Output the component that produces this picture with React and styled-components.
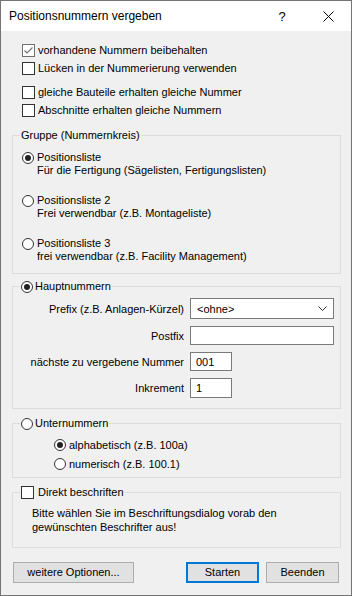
import React from 'react'
import styled, { createGlobalStyle } from 'styled-components'

const GlobalStyle = createGlobalStyle`
  html, body {
    margin: 0;
    padding: 0;
    background: #ffffff;
  }
  body {
    font-family: "Liberation Sans", Arial, sans-serif;
    font-size: 11px;
    color: #000;
  }
`

const Window = styled.div`
  width: 352px;
  height: 596px;
  box-sizing: border-box;
  border: 1px solid #747474;
  background: #f0f0f0;
  display: flex;
  flex-direction: column;
`

const TitleBar = styled.div`
  height: 30px;
  background: #ffffff;
  display: flex;
  align-items: center;
  padding-left: 8px;
`

const Title = styled.div`
  flex: 1;
  font-size: 12px;
`

const TitleButton = styled.div`
  width: 46px;
  height: 30px;
  display: flex;
  align-items: center;
  justify-content: center;
  font-size: 13px;
`

const Body = styled.div`
  padding: 10px 10px 0 11px;
  display: flex;
  flex-direction: column;
`

const CheckList = styled.div`
  display: flex;
  flex-direction: column;
  margin-left: 10px;
  margin-top: ${p => p.$top || 0}px;
`

const Row = styled.label`
  height: ${p => p.$h || 18}px;
  display: flex;
  align-items: center;
  gap: ${p => p.$gap || 3}px;
  white-space: nowrap;
`

const Box = styled.span`
  width: 13px;
  height: 13px;
  box-sizing: border-box;
  border: 1px solid ${p => (p.$muted ? '#707070' : '#333333')};
  background: #ffffff;
  flex: none;
  display: flex;
  align-items: center;
  justify-content: center;
`

const Circle = styled.span`
  width: 12px;
  height: 12px;
  box-sizing: border-box;
  border: 1px solid #333333;
  border-radius: 50%;
  background: #ffffff;
  flex: none;
  display: flex;
  align-items: center;
  justify-content: center;
  margin-top: ${p => p.$top || 0}px;
  &::after {
    content: '';
    width: 6px;
    height: 6px;
    border-radius: 50%;
    background: ${p => (p.$on ? '#222222' : 'transparent')};
  }
`

const Checkbox = ({ checked, muted }) => (
  <Box $muted={muted}>
    {checked && (
      <svg width="11" height="11" viewBox="0 0 11 11">
        <path d="M1.5 5.5 L4 8 L9.5 2.5" fill="none" stroke="#707070" strokeWidth="1.1" />
      </svg>
    )}
  </Box>
)

const Group = styled.fieldset`
  margin: ${p => p.$top || 0}px 0 0 0;
  padding: 0;
  min-width: 0;
  border: 1px solid #dcdcdc;
`

const Legend = styled.legend`
  margin-left: 7px;
  padding: 0 1px;
  line-height: 13px;
  display: flex;
  align-items: center;
  gap: ${p => p.$gap || 0}px;
  white-space: nowrap;
`

const GroupBody = styled.div`
  padding: ${p => p.$pad};
  display: flex;
  flex-direction: column;
  gap: ${p => p.$gap || 0}px;
`

const Choice = styled.label`
  display: flex;
  align-items: flex-start;
  gap: 3px;
`

const ChoiceText = styled.div`
  line-height: 13px;
`

const FormGrid = styled.div`
  display: grid;
  grid-template-columns: 171px 1fr;
  grid-template-rows: 21px 19px 19px 20px;
  column-gap: 6px;
  row-gap: 7px;
  padding: 5px 0 10px 0;
  align-items: center;
`

const FieldLabel = styled.div`
  text-align: right;
  white-space: nowrap;
`

const Input = styled.div`
  width: ${p => p.$w}px;
  height: 100%;
  box-sizing: border-box;
  border: 1px solid #7a7a7a;
  background: #ffffff;
  display: flex;
  align-items: center;
  padding-left: 5px;
  font-size: 11px;
`

const Select = styled(Input)`
  padding: 0 6px 0 6px;
  justify-content: space-between;
`

const Note = styled.p`
  margin: 0;
  line-height: 14px;
`

const ButtonRow = styled.div`
  display: flex;
  margin: 14px 2px 0 1px;
  gap: 7px;
`

const Button = styled.div`
  width: ${p => p.$w}px;
  height: 21px;
  box-sizing: border-box;
  background: #e1e1e1;
  border: ${p => (p.$default ? '2px solid #0078d7' : '1px solid #adadad')};
  display: flex;
  align-items: center;
  justify-content: center;
  margin-left: ${p => p.$push ? 'auto' : '0'};
  padding-bottom: 1px;
`

export default function App() {
  return (
    <>
      <GlobalStyle />
      <Window>
        <TitleBar>
          <Title>Positionsnummern vergeben</Title>
          <TitleButton>?</TitleButton>
          <TitleButton>
            <svg width="11" height="11" viewBox="0 0 11 11">
              <path d="M0.5 0.5 L10.5 10.5 M10.5 0.5 L0.5 10.5" stroke="#000" strokeWidth="1" />
            </svg>
          </TitleButton>
        </TitleBar>
        <Body>
          <CheckList>
            <Row><Checkbox checked muted />vorhandene Nummern beibehalten</Row>
            <Row><Checkbox />Lücken in der Nummerierung verwenden</Row>
          </CheckList>
          <CheckList $top={6}>
            <Row><Checkbox />gleiche Bauteile erhalten gleiche Nummer</Row>
            <Row><Checkbox />Abschnitte erhalten gleiche Nummern</Row>
          </CheckList>

          <Group $top={10}>
            <Legend>Gruppe (Nummernkreis)</Legend>
            <GroupBody $pad="9px 0 10px 9px" $gap={17}>
              <Choice>
                <Circle $on $top={1} />
                <ChoiceText>Positionsliste<br />Für die Fertigung (Sägelisten, Fertigungslisten)</ChoiceText>
              </Choice>
              <Choice>
                <Circle $top={1} />
                <ChoiceText>Positionsliste 2<br />Frei verwendbar (z.B. Montageliste)</ChoiceText>
              </Choice>
              <Choice>
                <Circle $top={1} />
                <ChoiceText>Positionsliste 3<br />frei verwendbar (z.B. Facility Management)</ChoiceText>
              </Choice>
            </GroupBody>
          </Group>

          <Group $top={6}>
            <Legend $gap={2}><Circle $on />Hauptnummern</Legend>
            <FormGrid>
              <FieldLabel>Prefix (z.B. Anlagen-Kürzel)</FieldLabel>
              <Select $w={144}>
                <span>&lt;ohne&gt;</span>
                <svg width="9" height="5" viewBox="0 0 9 5">
                  <path d="M0.5 0.5 L4.5 4.5 L8.5 0.5" fill="none" stroke="#333" strokeWidth="1" />
                </svg>
              </Select>
              <FieldLabel>Postfix</FieldLabel>
              <Input $w={144} />
              <FieldLabel>nächste zu vergebene Nummer</FieldLabel>
              <Input $w={42}>001</Input>
              <FieldLabel>Inkrement</FieldLabel>
              <Input $w={42}>1</Input>
            </FormGrid>
          </Group>

          <Group $top={8}>
            <Legend $gap={2}><Circle />Unternummern</Legend>
            <GroupBody $pad="5px 0 4px 41px">
              <Row $h={19}><Circle $on />alphabetisch (z.B. 100a)</Row>
              <Row $h={19}><Circle />numerisch (z.B. 100.1)</Row>
            </GroupBody>
          </Group>

          <Group $top={8}>
            <Legend $gap={4}><Checkbox />Direkt beschriften</Legend>
            <GroupBody $pad="7px 0 13px 19px">
              <Note>Bitte wählen Sie im Beschriftungsdialog vorab den<br />gewünschten Beschrifter aus!</Note>
            </GroupBody>
          </Group>

          <ButtonRow>
            <Button $w={121}>weitere Optionen...</Button>
            <Button $w={73} $default $push>Starten</Button>
            <Button $w={73}>Beenden</Button>
          </ButtonRow>
        </Body>
      </Window>
    </>
  )
}
